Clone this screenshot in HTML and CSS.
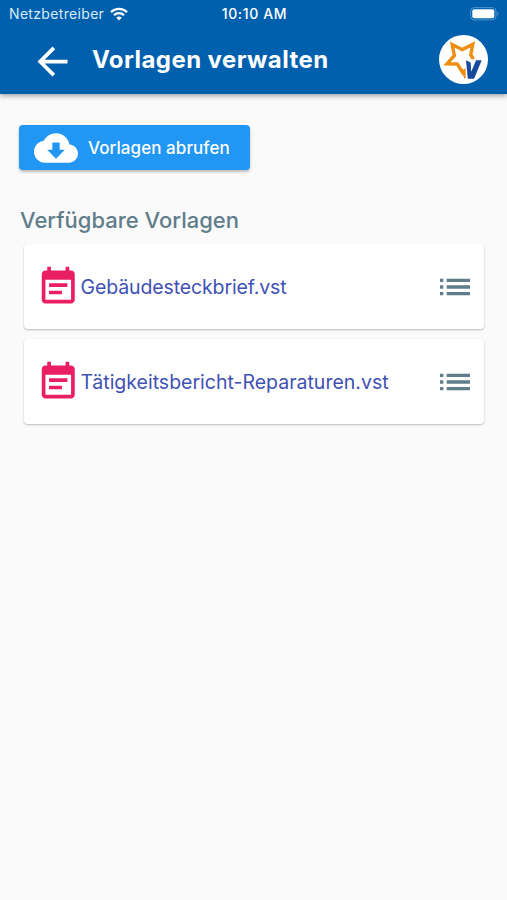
FILE: index.html
```html
<!DOCTYPE html>
<html lang="de">
<head>
  <meta charset="UTF-8" />
  <meta name="viewport" content="width=device-width, initial-scale=1" />
  <title>Vorlagen verwalten</title>
  <link rel="stylesheet" href="styles.css">
</head>
<body>

  <header class="header">
    <div class="statusbar">
      <div class="carrier">
        <span class="carrier-name">Netzbetreiber</span>
        <svg class="wifi" viewBox="0 0 18 14" fill="none" stroke="#fff" stroke-width="2.3">
          <path d="M1 5.1a11.4 11.4 0 0 1 16 0" />
          <path d="M4 8.3a7 7 0 0 1 10 0" />
          <path d="M9 13.6L6.2 10.8a4 4 0 0 1 5.6 0z" fill="#fff" stroke="none" />
        </svg>
      </div>
      <span class="time">10:10 AM</span>
      <svg class="battery" viewBox="0 0 30 14">
        <rect x=".6" y=".6" width="25.4" height="12.3" rx="3.6" fill="none" stroke="#4f93cc" stroke-width="1" />
        <rect x="2.3" y="2.3" width="22" height="8.9" rx="2" fill="#fff" />
        <path d="M27.2 4.8c1.8.7 1.8 3.3 0 4z" fill="#4f93cc" />
      </svg>
    </div>

    <div class="toolbar">
      <button class="back" aria-label="Zurück">
        <svg viewBox="0 0 24 24" fill="#fff"><path d="M20 11H7.83l5.59-5.59L12 4l-8 8 8 8 1.41-1.41L7.83 13H20v-2z" /></svg>
      </button>
      <h1>Vorlagen verwalten</h1>
      <svg class="logo" viewBox="0 0 49 49">
        <circle cx="24.5" cy="24.5" r="24.5" fill="#fff" />
        <path d="M25 39.5L18.2 29L8 28.8L15.4 20.4L13.2 9.6L23.2 14.6L33.8 9.4L31.8 19.8L34.4 24" fill="none" stroke="#ee8f12" stroke-width="3.4" />
        <path d="M22.6 35l4-1.5v9.8l-1.4.2z" fill="#ee8f12" />
        <path d="M27 25.2l4.6 2.4.6 9.2 4.9-11.6h5.6l-7.6 18.6h-6.3z" fill="#174a9c" />
      </svg>
    </div>
  </header>

  <main class="main">
    <button class="fetch-btn">
      <svg viewBox="0 0 24 24" fill="#fff"><path d="M19.35 10.04C18.67 6.59 15.64 4 12 4 9.11 4 6.6 5.64 5.35 8.04 2.34 8.36 0 10.91 0 14c0 3.31 2.69 6 6 6h13c2.76 0 5-2.24 5-5 0-2.64-2.05-4.78-4.65-4.96zM16.8 13L12 17.8l-4.8-4.8h2.8V9h4v4z" /></svg>
      <span>Vorlagen abrufen</span>
    </button>

    <h2>Verfügbare Vorlagen</h2>

    <div class="list">
      <div class="card">
        <svg class="note" viewBox="0 0 24 24"><path d="M17 10H7v2h10v-2zm2-7h-1V1h-2v2H8V1H6v2H5c-1.11 0-1.99.9-1.99 2L3 19c0 1.1.89 2 2 2h14c1.1 0 2-.9 2-2V5c0-1.1-.9-2-2-2zm0 16H5V8h14v11zm-5-5H7v2h7v-2z" /></svg>
        <span class="file file-short">Gebäudesteckbrief.vst</span>
        <svg class="menu" viewBox="0 0 24 24"><path d="M3 13h2v-2H3v2zm0 4h2v-2H3v2zm0-8h2V7H3v2zm4 4h14v-2H7v2zm0 4h14v-2H7v2zM7 7v2h14V7H7z" /></svg>
      </div>
      <div class="card">
        <svg class="note" viewBox="0 0 24 24"><path d="M17 10H7v2h10v-2zm2-7h-1V1h-2v2H8V1H6v2H5c-1.11 0-1.99.9-1.99 2L3 19c0 1.1.89 2 2 2h14c1.1 0 2-.9 2-2V5c0-1.1-.9-2-2-2zm0 16H5V8h14v11zm-5-5H7v2h7v-2z" /></svg>
        <span class="file">Tätigkeitsbericht-Reparaturen.vst</span>
        <svg class="menu" viewBox="0 0 24 24"><path d="M3 13h2v-2H3v2zm0 4h2v-2H3v2zm0-8h2V7H3v2zm4 4h14v-2H7v2zm0 4h14v-2H7v2zM7 7v2h14V7H7z" /></svg>
      </div>
    </div>
  </main>

</body>
</html>
```
FILE: styles.css
```css
* {
  box-sizing: border-box;
}
html, body {
  margin: 0;
  padding: 0;
  height: 100%;
  font-family: Inter, Roboto, sans-serif;
  background: #fafafa;
}
svg {
  display: block;
  flex-shrink: 0;
}
button {
  border: none;
  padding: 0;
  font-family: inherit;
  cursor: pointer;
}
.header {
  height: 94px;
  background: #0060ae;
  color: #fff;
  box-shadow: 0 2px 5px rgba(0, 0, 0, 0.35);
}
.statusbar {
  height: 27px;
  padding: 0 7px 0 9px;
  display: grid;
  grid-template-columns: 1fr auto 1fr;
  align-items: center;
  font-size: 14px;
  line-height: 27px;
}
.carrier {
  display: flex;
  align-items: center;
  gap: 6px;
}
.carrier-name {
  color: #d9e9f7;
  letter-spacing: 0.33px;
}
.wifi {
  width: 18px;
  height: 14px;
}
.time {
  font-weight: 500;
  letter-spacing: 0.65px;
}
.battery {
  width: 30px;
  height: 14px;
  justify-self: end;
}
.toolbar {
  height: 67px;
  padding: 0 19px 2px 30px;
  display: flex;
  align-items: center;
}
.back {
  margin-top: 4px;
  background: none;
}
.back svg {
  width: 45px;
  height: 45px;
}
.toolbar h1 {
  margin: 0 auto 0 17px;
  font-size: 24px;
  font-weight: 700;
  letter-spacing: 0.42px;
}
.logo {
  width: 49px;
  height: 49px;
}
.main {
  padding: 31px 19px 0;
}
.fetch-btn {
  width: 231px;
  height: 45px;
  padding-left: 15px;
  display: flex;
  align-items: center;
  gap: 10px;
  background: #2196f3;
  color: #fff;
  font-size: 17px;
  font-weight: 500;
  letter-spacing: 0.07px;
  border-radius: 4px;
  box-shadow: 0 2px 3px rgba(0, 0, 0, 0.25);
}
.fetch-btn svg {
  width: 44px;
  height: 44px;
}
h2 {
  margin: 36px 0 9px 1px;
  font-size: 22px;
  line-height: 29px;
  font-weight: 450;
  color: #607d8b;
}
.list {
  margin: 0 4px 0 5px;
  display: flex;
  flex-direction: column;
  gap: 10px;
}
.card {
  height: 85px;
  padding: 0 9.5px 0 12px;
  display: flex;
  align-items: center;
  background: #fff;
  border-radius: 4px;
  box-shadow: 0 1px 2px rgba(0, 0, 0, 0.25);
}
.note {
  width: 44.5px;
  height: 44px;
  fill: #e91e63;
}
.file {
  flex-grow: 1;
  font-size: 19.5px;
  color: #3f51b5;
}
.file-short {
  letter-spacing: -0.12px;
}
.menu {
  width: 40px;
  height: 40px;
  fill: #607d8b;
}
```
